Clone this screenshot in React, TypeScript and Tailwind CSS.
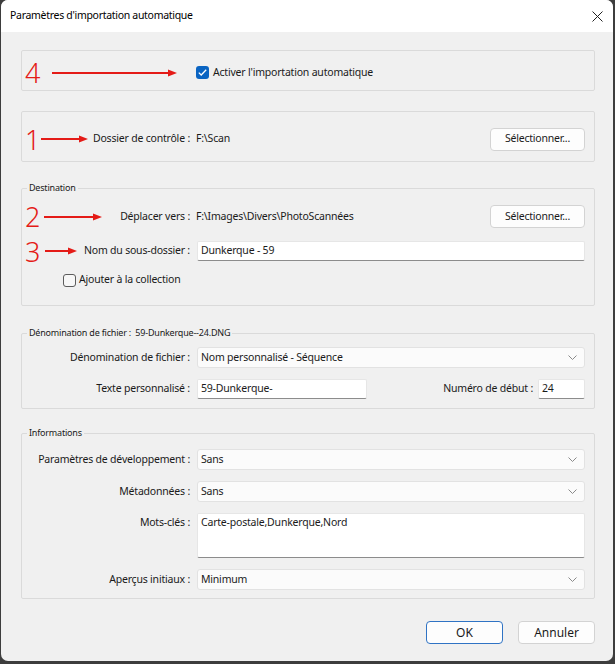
import React from 'react';

const RED = '#e41b17';

function Arrow({ width }: { width: number }) {
    return (
        <svg width={width} height={8} viewBox={`0 0 ${width} 8`} className="shrink-0">
            <line x1={0} y1={4} x2={width - 7} y2={4} stroke={RED} strokeWidth={2} />
            <polygon points={`${width - 9},0.5 ${width},4 ${width - 9},7.5`} fill={RED} />
        </svg>
    );
}

function Mark({ n }: { n: string }) {
    return <span className="text-[27px] leading-none font-light tracking-normal text-[#e41b17] w-[14px] shrink-0">{n}</span>;
}

function Chevron() {
    return (
        <svg width={9} height={5} viewBox="0 0 9 5" className="shrink-0">
            <polyline points="0.5,0.5 4.5,4.5 8.5,0.5" fill="none" stroke="#8a8a8a" strokeWidth={1} />
        </svg>
    );
}

function Btn({ label, className = '' }: { label: string; className?: string }) {
    return (
        <button
            type="button"
            className={`h-[23px] rounded-[4px] border bg-[#fdfdfd] text-center whitespace-nowrap ${className}`}
        >
            {label}
        </button>
    );
}

function Field({ value, className = '' }: { value: string; className?: string }) {
    return (
        <div className={`h-[20px] bg-white border border-[#e6e6e6] border-b-[#8c8c8c] rounded-[2px] flex items-center pl-[3px] whitespace-nowrap ${className}`}>
            {value}
        </div>
    );
}

function Select({ value }: { value: string }) {
    return (
        <div className="h-[21px] bg-[#fbfbfb] border border-[#e2e2e2] rounded-[3px] flex items-center justify-between pl-[3px] pr-[7px]">
            <span>{value}</span>
            <Chevron />
        </div>
    );
}

function Group({ legend, className = '', children }: { legend?: string; className?: string; children: React.ReactNode }) {
    return (
        <div className={`relative w-[574px] border border-[#dadada] rounded-[2px] ${className}`}>
            {legend && (
                <span className="absolute -top-[8px] left-[5px] px-[2px] bg-[#f0f0f0] text-[9px] leading-[14px] tracking-[-0.2px] whitespace-pre">
                    {legend}
                </span>
            )}
            {children}
        </div>
    );
}

export default function App() {
    return (
        <div className="w-[615px] h-[664px] bg-[#3d3d3d] font-['Noto_Sans',sans-serif] text-[10.5px] tracking-[-0.2px] text-[#1a1a1a]">
            <div className="ml-[1px] w-[612px] h-[661px] rounded-[7px] overflow-hidden bg-[#f0f0f0] flex flex-col">
                {/* title bar */}
                <div className="h-[32px] shrink-0 bg-white flex items-center justify-between pl-[9px] pr-[10px]">
                    <span className="text-[10.5px] tracking-[-0.3px] text-black">Paramètres d'importation automatique</span>
                    <svg width={11} height={11} viewBox="0 0 11 11">
                        <path d="M0.5 0.5 L10.5 10.5 M10.5 0.5 L0.5 10.5" stroke="#222" strokeWidth={1} />
                    </svg>
                </div>

                <div className="flex flex-col pl-[20px] pt-[18px]">
                    {/* auto import */}
                    <Group className="h-[41px] flex items-center pl-[3px] pt-[4px]">
                        <Mark n="4" />
                        <div className="ml-[13px]">
                            <Arrow width={125} />
                        </div>
                        <div className="ml-[19px] w-[13px] h-[13px] rounded-[3px] bg-[#0a64c2] flex items-center justify-center">
                            <svg width={9} height={7} viewBox="0 0 9 7">
                                <polyline points="0.8,3.6 3.2,6 8.2,0.8" fill="none" stroke="white" strokeWidth={1.3} />
                            </svg>
                        </div>
                        <span className="ml-[4px]">Activer l'importation automatique</span>
                    </Group>

                    {/* watch folder */}
                    <Group className="mt-[20px] h-[51px] flex items-center pr-[9px] pt-[5px]">
                        <div className="w-[168px] flex items-center pl-[3px]">
                            <Mark n="1" />
                            <div className="ml-[2px]">
                                <Arrow width={47} />
                            </div>
                            <span className="flex-1 text-right whitespace-nowrap">Dossier de contrôle :</span>
                        </div>
                        <span className="ml-[6px] flex-1">F:\Scan</span>
                        <Btn label="Sélectionner..." className="w-[95px] border-[#d3d3d3]" />
                    </Group>

                    {/* destination */}
                    <Group legend="Destination" className="mt-[26px] h-[118px] pr-[9px]">
                        <div className="mt-[16px] h-[23px] flex items-center">
                            <div className="w-[168px] flex items-center pl-[3px]">
                                <Mark n="2" />
                                <div className="ml-[5px]">
                                    <Arrow width={58} />
                                </div>
                                <span className="flex-1 text-right whitespace-nowrap">Déplacer vers :</span>
                            </div>
                            <span className="ml-[6px] flex-1">F:\Images\Divers\PhotoScannées</span>
                            <Btn label="Sélectionner..." className="w-[95px] border-[#d3d3d3]" />
                        </div>
                        <div className="mt-[13px] h-[20px] flex items-center">
                            <div className="w-[168px] flex items-center pl-[3px]">
                                <Mark n="3" />
                                <div className="ml-[6px]">
                                    <Arrow width={32} />
                                </div>
                                <span className="flex-1 text-right whitespace-nowrap">Nom du sous-dossier :</span>
                            </div>
                            <Field value="Dunkerque - 59" className="ml-[7px] flex-1" />
                        </div>
                        <div className="mt-[12px] h-[14px] flex items-center pl-[41px]">
                            <div className="w-[13px] h-[13px] rounded-[3px] border border-[#5c5c5c] bg-[#f7f7f7]" />
                            <span className="ml-[3px]">Ajouter à la collection</span>
                        </div>
                    </Group>

                    {/* file naming */}
                    <Group legend="Dénomination de fichier :  59-Dunkerque--24.DNG" className="mt-[27px] h-[76px] pr-[9px]">
                        <div className="mt-[13px] grid grid-cols-[168px_1fr] gap-x-[7px] items-center">
                            <span className="text-right whitespace-nowrap">Dénomination de fichier :</span>
                            <Select value="Nom personnalisé - Séquence" />
                        </div>
                        <div className="mt-[11px] flex items-center">
                            <span className="w-[168px] text-right whitespace-nowrap">Texte personnalisé :</span>
                            <Field value="59-Dunkerque-" className="ml-[7px] w-[170px] h-[19px]" />
                            <span className="flex-1 text-right whitespace-nowrap">Numéro de début :</span>
                            <Field value="24" className="ml-[5px] w-[47px] h-[19px]" />
                        </div>
                    </Group>

                    {/* informations */}
                    <Group legend="Informations" className="mt-[24px] h-[166px] pr-[9px]">
                        <div className="mt-[15px] grid grid-cols-[168px_1fr] gap-x-[7px] gap-y-[11px] items-center">
                            <span className="text-right whitespace-nowrap">Paramètres de développement :</span>
                            <Select value="Sans" />
                            <span className="text-right">Métadonnées :</span>
                            <Select value="Sans" />
                            <span className="text-right self-start pt-[2px]">Mots-clés :</span>
                            <div className="h-[45px] bg-white border border-[#e6e6e6] border-b-[#8c8c8c] rounded-[2px] pl-[3px] pt-[1px]">
                                Carte-postale,Dunkerque,Nord
                            </div>
                            <span className="text-right">Aperçus initiaux :</span>
                            <Select value="Minimum" />
                        </div>
                    </Group>

                    {/* footer */}
                    <div className="mt-[22px] w-[574px] flex justify-end gap-[15px]">
                        <Btn label="OK" className="w-[77px] border-[#2f73c4] text-[12px] tracking-normal" />
                        <Btn label="Annuler" className="w-[77px] border-[#d3d3d3] text-[12px] tracking-normal" />
                    </div>
                </div>
            </div>
        </div>
    );
}
